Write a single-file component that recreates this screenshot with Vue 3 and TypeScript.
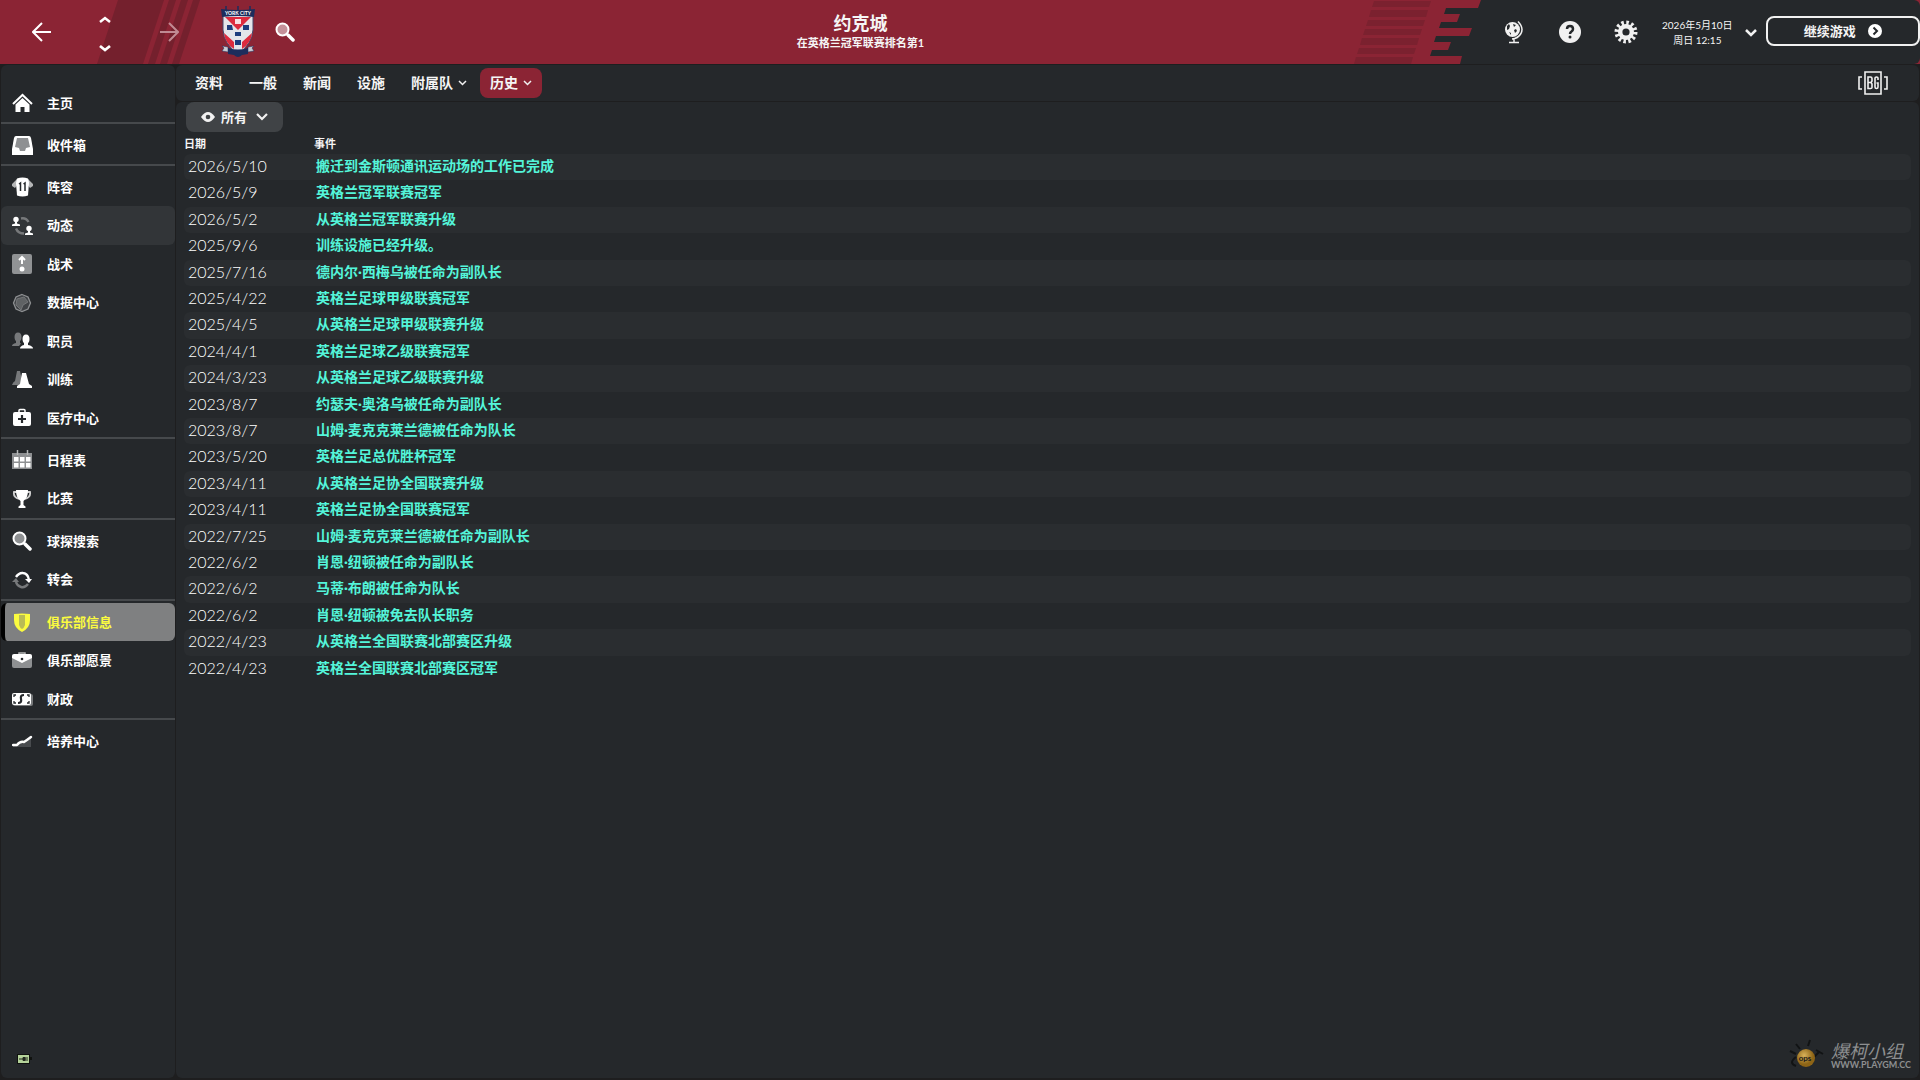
<script setup lang="ts">
import { ref } from 'vue'

interface NavItem {
  label: string
  icon: string
}

interface ClubEvent {
  date: string
  text: string
}

const icons: Record<string, string> = {
  home: '<path d="M1 11 10.500 2 20 11" fill="none" stroke="#fff" stroke-width="2"/><path d="M10.500 5 3.500 11.500V19h5v-5h4v5h5v-7.500z" fill="#fff"/>',
  inbox: '<path d="M4 1h13q1.500 0 2 2l2 11v6H0v-6L2 3q.5-2 2-2z" fill="#fff"/><path d="M5 3h11l2 9-4 1-1 3H8l-1-3-4-1z" fill="#8e9092"/>',
  shirt: '<path d="M5 2 0 7v2l3 2 3-4zM16 2l5 5v2l-3 2-3-4z" fill="#b5b6b7"/><path d="M5 1.500q5.500-2 11 0l1 4-1 13q-5.500 2-11 0L4 6z" fill="#fff"/><path d="m7 7 1.500-1v8M11.500 7 13 6v8" fill="none" stroke="#25282b" stroke-width="1.500"/>',
  dynamics: '<path d="M9 2.500q5-1 7.500 3.500M4 12.500q2 5 8 5" fill="none" stroke="#77797b" stroke-width="2.400"/><circle cx="4" cy="3.500" r="2.700" fill="#fff"/><path d="M3 5h2v2.500l3 1V10H0V8.500l3-1zM16 14h2v2.500l3 1V19h-8v-1.500l3-1z" fill="#fff"/><circle cx="17" cy="12.500" r="2.700" fill="#fff"/>',
  tactics: '<rect x="0" y="0" width="20" height="20" rx="2" fill="#909294"/><path d="M10 10V3M7 6l3-3 3 3" fill="none" stroke="#fff" stroke-width="2"/><circle cx="10" cy="15" r="2.500" fill="#fff"/>',
  data: '<path d="M10 1.500 16 4l2.500 6L16 16l-6 2.500L4 16l-2.500-6L4 4z" fill="#3f4245" stroke="#8e9092" stroke-width="1.300"/><path d="m5 6 7-2 4 5-5 3-2 5-5-5z" fill="#5f6264" stroke="#747678"/>',
  staff: '<g fill="#77797b"><ellipse cx="6" cy="6" rx="3.500" ry="4.500"/><path d="M4 9h4v3l1 .5-2 2.500H0q0-2 4-3z"/></g><g fill="#fff"><ellipse cx="14" cy="8" rx="3.500" ry="4.500"/><path d="M12 11h4v3q5 1 5 3.500H8q0-2.500 4-3.500z"/></g>',
  training: '<path d="M5 1h3l3 14H0q1-3 3-4z" fill="#77797b"/><path d="M10 3h4l3 11 3 2v2H5v-2l3-2z" fill="#fff"/>',
  medical: '<rect x="7" y="1.500" width="6" height="5" rx="1" fill="none" stroke="#fff" stroke-width="1.500"/><rect x="1" y="4" width="18" height="14" rx="2" fill="#fff"/><path d="M10 7v8M6 11h8" stroke="#25282b" stroke-width="2.200"/>',
  calendar: '<path d="M0 3h20v16H0z" fill="#8e9092"/><path d="M5.500 0v5M15.500 0v5" stroke="#b5b6b7" stroke-width="1.500"/><path d="M2 7h4.500v4.500H2zM8 7h4.500v4.500H8zM14 7h4.500v4.500H14zM2 13h4.500v4.500H2zM8 13h4.500v4.500H8zM14 13h4.500v4.500H14z" fill="#fff"/>',
  cup: '<path d="M5 3H2q-1 5 5 7M15 3h3q1 5-5 7" fill="none" stroke="#d0d0d0" stroke-width="1.800"/><path d="M4 1h12q0 8-4.500 11v4l2 1.500V19h-7v-1.500l2-1.500v-4Q4 9 4 1z" fill="#fff"/>',
  search: '<circle cx="7.500" cy="7.500" r="6" fill="#8e9092" stroke="#fff" stroke-width="2"/><path d="m13 13 5 5" stroke="#fff" stroke-width="3.500" stroke-linecap="round"/>',
  transfer: '<path d="M4 7Q7 2.500 11 3q5 .5 6 7" fill="none" stroke="#fff" stroke-width="2.400"/><path d="M13 9h7l-3 4z" fill="#fff"/><path d="M16 14q-3 4-7 3-4-1-5-5" fill="none" stroke="#77797b" stroke-width="2.400"/><path d="M0 12h7l-3-4z" fill="#77797b"/>',
  shield: '<path d="M2 2q8-1 16 0v6q0 8-8 12Q2 16 2 8z" fill="#fbfb3f"/><path d="M7 3h6v10q-1 3-3 4-2-1-3-4z" fill="#b9bb55"/>',
  briefcase: '<path d="M7 4V2h6v2" fill="none" stroke="#b5b6b7" stroke-width="1.500"/><path d="M0 6q0-2 2-2h16q2 0 2 2v9q0 2-2 2H2q-2 0-2-2z" fill="#8e9092"/><path d="M0 5q0-2 2-2h16q2 0 2 2v2l-10 5L0 7z" fill="#fff"/><circle cx="10" cy="8" r="1.300" fill="#25282b"/>',
  finance: '<rect x="1" y="5" width="20" height="12" rx="2" fill="#77797b"/><rect x="0" y="4" width="19" height="12" rx="2" fill="#fff"/><path d="M12 6q-4 0-3 4t-3 4" fill="none" stroke="#25282b" stroke-width="2.200"/><path d="M2 8V6h2M15 6h2v2M2 12v2h2M15 14h2v-2" fill="none" stroke="#25282b" stroke-width="1.300"/>',
  youth: '<path d="M1 14h4l4-4 4 1 6-5v10H1z" fill="#484b4e"/><path d="M1 14h4q3-4 7-3 3-2 7-5" fill="none" stroke="#fff" stroke-width="2.400" stroke-linecap="round" stroke-linejoin="round"/>',
}

const navGroups: NavItem[][] = [
  [{ label: '主页', icon: 'home' }],
  [{ label: '收件箱', icon: 'inbox' }],
  [
    { label: '阵容', icon: 'shirt' },
    { label: '动态', icon: 'dynamics' },
    { label: '战术', icon: 'tactics' },
    { label: '数据中心', icon: 'data' },
    { label: '职员', icon: 'staff' },
    { label: '训练', icon: 'training' },
    { label: '医疗中心', icon: 'medical' },
  ],
  [
    { label: '日程表', icon: 'calendar' },
    { label: '比赛', icon: 'cup' },
  ],
  [
    { label: '球探搜索', icon: 'search' },
    { label: '转会', icon: 'transfer' },
  ],
  [
    { label: '俱乐部信息', icon: 'shield' },
    { label: '俱乐部愿景', icon: 'briefcase' },
    { label: '财政', icon: 'finance' },
  ],
  [{ label: '培养中心', icon: 'youth' }],
]

const activeNav = ref('俱乐部信息')
const hoveredNav = ref('动态')

const tabs = [
  { label: '资料', menu: false },
  { label: '一般', menu: false },
  { label: '新闻', menu: false },
  { label: '设施', menu: false },
  { label: '附属队', menu: true },
  { label: '历史', menu: true },
]
const activeTab = ref('历史')

const events: ClubEvent[] = [
  { date: '2026/5/10', text: '搬迁到金斯顿通讯运动场的工作已完成' },
  { date: '2026/5/9', text: '英格兰冠军联赛冠军' },
  { date: '2026/5/2', text: '从英格兰冠军联赛升级' },
  { date: '2025/9/6', text: '训练设施已经升级。' },
  { date: '2025/7/16', text: '德内尔·西梅乌被任命为副队长' },
  { date: '2025/4/22', text: '英格兰足球甲级联赛冠军' },
  { date: '2025/4/5', text: '从英格兰足球甲级联赛升级' },
  { date: '2024/4/1', text: '英格兰足球乙级联赛冠军' },
  { date: '2024/3/23', text: '从英格兰足球乙级联赛升级' },
  { date: '2023/8/7', text: '约瑟夫·奥洛乌被任命为副队长' },
  { date: '2023/8/7', text: '山姆·麦克克莱兰德被任命为队长' },
  { date: '2023/5/20', text: '英格兰足总优胜杯冠军' },
  { date: '2023/4/11', text: '从英格兰足协全国联赛升级' },
  { date: '2023/4/11', text: '英格兰足协全国联赛冠军' },
  { date: '2022/7/25', text: '山姆·麦克克莱兰德被任命为副队长' },
  { date: '2022/6/2', text: '肖恩·纽顿被任命为副队长' },
  { date: '2022/6/2', text: '马蒂·布朗被任命为队长' },
  { date: '2022/6/2', text: '肖恩·纽顿被免去队长职务' },
  { date: '2022/4/23', text: '从英格兰全国联赛北部赛区升级' },
  { date: '2022/4/23', text: '英格兰全国联赛北部赛区冠军' },
]
</script>

<template>
  <div class="app">
    <header class="topbar">
      <div class="club-side">
        <svg class="stripes" width="204" height="64" viewBox="0 0 204 64" aria-hidden="true">
          <path d="M118 0h46l-21 64H97zM169 0h7l-21 64h-7zM181 0h7l-21 64h-7zM193 0h7l-21 64h-7z" fill="#74202d" />
        </svg>
        <button class="icon-btn" aria-label="后退">
          <svg width="20" height="20" viewBox="0 0 20 20" fill="none" stroke="#fff" stroke-width="2"><path d="M19 10H2M10 1 1 10l9 9" /></svg>
        </button>
        <div class="stepper">
          <button class="icon-btn" aria-label="上一个">
            <svg width="12" height="8" viewBox="0 0 12 8" fill="none" stroke="#fff" stroke-width="2.500"><path d="m1 6 5-4 5 4" /></svg>
          </button>
          <button class="icon-btn" aria-label="下一个">
            <svg width="12" height="8" viewBox="0 0 12 8" fill="none" stroke="#fff" stroke-width="2.800"><path d="m1 2 5 4 5-4" /></svg>
          </button>
        </div>
        <button class="icon-btn" aria-label="前进">
          <svg width="20" height="20" viewBox="0 0 20 20" fill="none" stroke="#c08a93" stroke-width="2"><path d="M1 10h17M10 1l9 9-9 9" /></svg>
        </button>
        <svg class="crest" width="34" height="52" viewBox="0 0 34 52" role="img" aria-label="York City">
          <path d="M5 5V0M17 5V0M29 5V0" stroke="#1d2d5c" stroke-width="1.500" />
          <path d="M2 9h30v15q-1 14-15 24Q3 38 2 24z" fill="#e3e5ea" stroke="#44476a" />
          <path d="M4 11h26L17 24z" fill="#dc2b3e" />
          <path d="M3 27l10 9v7Q4 37 3 27zM31 27l-10 9v7q9-6 10-16z" fill="#dc2b3e" />
          <path d="M14 13h6v5h-6z" fill="#f7dfe2" />
          <g fill="#1d3d7d">
            <path d="M6 19h5l1 5H6zM22 19h6v5h-6zM14 26h6v4h-6zM14 34h6v5h-6z" />
            <path d="M0 3q17 2 34 0l-1 8q-16-2-32 0z" fill="#1d2d5c" />
          </g>
          <path d="M1 40l6 1v5l-6-1 2-3zM33 40l-6 1v5l6-1-2-3z" fill="#c8cbd2" stroke="#1d2d5c" stroke-width="0.500" />
          <path d="M7 42q10 3 20 0v6l-6 1q-4 4-8 0l-6-1z" fill="#1d2d5c" />
          <text x="17" y="9" font-size="5" font-weight="700" text-anchor="middle" fill="#fff">YORK CITY</text>
        </svg>
        <button class="icon-btn" aria-label="搜索">
          <svg width="20" height="20" viewBox="0 0 20 20"><circle cx="7.500" cy="7.500" r="6" fill="#c5919a" stroke="#fff" stroke-width="2" /><path d="m13 13 5 5" stroke="#fff" stroke-width="3.500" stroke-linecap="round" /></svg>
        </button>
      </div>

      <div class="club-title">
        <h1>约克城</h1>
        <p>在英格兰冠军联赛排名第1</p>
      </div>

      <div class="tools">
        <svg class="stripes" width="150" height="64" viewBox="0 0 150 64" aria-hidden="true">
          <path d="M0 0h131l-3 8H96l-2 6h16l-3 8H91l-2 6h33l-3 8H86l-2 6h17l-3 8H82l-2 6h32l-2 8H0z" fill="#8b2434" />
          <path d="M24 1h57l-2 6H22zM21 10h57l-2 7H19zM18 20h57l-2 6H16zM15 29h57l-2 6H13zM12 38h57l-2 7H10zM9 48h57l-2 6H7zM6 57h57l-2 7H4z" fill="#7b212f" />
        </svg>
        <button class="icon-btn tool" aria-label="世界">
          <svg width="20" height="24" viewBox="0 0 20 24"><circle cx="8.500" cy="9.500" r="7.500" fill="#f1f1f1" /><path d="M14 1.500q6 6 3 12-3 5-9 5.500M10 19v3M5 22.500h10" fill="none" stroke="#f1f1f1" stroke-width="1.500" /><path d="m3 6 2-2 1 2-1 3-2 1zM9 4l3 1-2 2zM10 10l2-1 1 2-2 2zM5 12l2 1v2z" fill="#25282b" /></svg>
        </button>
        <button class="icon-btn tool" aria-label="帮助">
          <svg width="22" height="22" viewBox="0 0 22 22"><circle cx="11" cy="11" r="11" fill="#f1f1f1" /><path d="M8 8q0-3 3-3t3 3q0 1.500-1.500 2.500T11 13" fill="none" stroke="#25282b" stroke-width="2.500" /><circle cx="11" cy="16" r="1.500" fill="#25282b" /></svg>
        </button>
        <button class="icon-btn tool" aria-label="设置">
          <svg width="24" height="24" viewBox="0 0 24 24"><circle cx="12" cy="12" r="9" fill="none" stroke="#f1f1f1" stroke-width="5" stroke-dasharray="2.400 2.312" /><circle cx="12" cy="12" r="5.800" fill="none" stroke="#f1f1f1" stroke-width="4.400" /></svg>
        </button>
        <button class="date">
          <span><time datetime="2026-05-10">2026年5月10日</time><br />周日 12:15</span>
          <svg width="12" height="8" viewBox="0 0 12 8" fill="none" stroke="#f1f1f1" stroke-width="2.500"><path d="m1 1 5 5 5-5" /></svg>
        </button>
        <button class="continue">
          <span>继续游戏</span>
          <svg width="14" height="14" viewBox="0 0 14 14"><circle cx="7" cy="7" r="7" fill="#fff" /><path d="m5.500 3.500 3.500 3.500-3.500 3.500" fill="none" stroke="#25282b" stroke-width="2" /></svg>
        </button>
      </div>
    </header>

    <div class="body">
      <nav class="sidebar panel">
        <ul v-for="(group, g) in navGroups" :key="g" class="nav-group">
          <li v-for="item in group" :key="item.label">
            <a
              href="#"
              :class="{ active: item.label === activeNav, hovered: item.label === hoveredNav }"
              @click.prevent="activeNav = item.label"
            >
              <svg width="21" height="20" viewBox="0 0 21 20" aria-hidden="true" v-html="icons[item.icon]"></svg>
              <span>{{ item.label }}</span>
            </a>
          </li>
        </ul>
        <svg class="battery" width="16" height="10" viewBox="0 0 16 10" aria-hidden="true"><path d="M0 0h13v3h2v3h-2v4H0z" fill="#10120f" /><path d="M1 1h11v8H1z" fill="#b5d39a" /><path d="M2 5h4M6 3.500h2v3H6zM8 4h3M8 6h3" fill="#23281f" stroke="#23281f" /></svg>
      </nav>

      <main class="main">
        <div class="tabbar panel">
          <button
            v-for="tab in tabs"
            :key="tab.label"
            :class="['tab', { active: tab.label === activeTab }]"
            @click="activeTab = tab.label"
          >
            <span>{{ tab.label }}</span>
            <svg v-if="tab.menu" width="9" height="6" viewBox="0 0 9 6" fill="none" stroke="#f1f1f1" stroke-width="1.500"><path d="m1 1 3.500 3.500L8 1" /></svg>
          </button>
          <svg class="badge" width="30" height="24" viewBox="0 0 30 24" role="img" aria-label="BG">
            <path d="M7 1h16v22H7zM4 6H1v12h3M26 6h3v12h-3" fill="none" stroke="#f1f1f1" stroke-width="1.600" />
            <path d="M10 6h2.500q1.500 0 1.500 1.500V10l-1 1.500 1 1.500v3.500q0 1-1.500 1H10zM10 11.500h3M20 9V7q0-1-1.500-1T17 7v9q0 1.500 1.500 1.500T20 16v-4h-1.500" fill="none" stroke="#f1f1f1" stroke-width="1.600" />
          </svg>
        </div>

        <section class="content panel">
          <button class="filter">
            <svg width="14" height="10" viewBox="0 0 14 10"><path d="M0 5q7-10 14 0-7 10-14 0z" fill="#f1f1f1" /><circle cx="7" cy="5" r="2.300" fill="#404346" /></svg>
            <span>所有</span>
            <svg class="caret" width="12" height="8" viewBox="0 0 12 8" fill="none" stroke="#f1f1f1" stroke-width="2.200"><path d="m1 1 5 5 5-5" /></svg>
          </button>

          <table class="history">
            <thead>
              <tr>
                <th class="col-date" scope="col">日期</th>
                <th scope="col">事件</th>
              </tr>
            </thead>
            <tbody>
              <tr v-for="(event, i) in events" :key="i">
                <td class="when">{{ event.date }}</td>
                <td><a href="#" @click.prevent>{{ event.text }}</a></td>
              </tr>
            </tbody>
          </table>

          <footer class="credit">
            <svg width="36" height="34" viewBox="0 0 36 34" aria-hidden="true">
              <defs>
                <radialGradient id="ball" cx="40%" cy="35%"><stop offset="0" stop-color="#d8b25a" /><stop offset="1" stop-color="#8d6416" /></radialGradient>
              </defs>
              <path d="m8 5 4 5M22 1l-2 6M2 12l6 3M26 18l5-5M28 11l7 4M8 18q-8 6 0 9" fill="none" stroke="#111314" stroke-width="2" />
              <circle cx="18" cy="19" r="9" fill="url(#ball)" />
              <text x="17" y="22" font-size="8" font-weight="700" text-anchor="middle" fill="#1b1b1b">ops</text>
            </svg>
            <div>
              <p class="credit-name">爆柯小组</p>
              <p class="credit-url">WWW.PLAYGM.CC</p>
            </div>
          </footer>
        </section>
      </main>
    </div>
  </div>
</template>

<style>
html,
body {
  background: #1e1e1f;
}
</style>

<style scoped>
* {
  box-sizing: border-box;
}

.app {
  display: flex;
  flex-direction: column;
  min-height: 100vh;
  color: #f5f5f5;
  font-family: Lato, 'Noto Sans CJK SC', sans-serif;
  font-size: 14px;
}

button {
  padding: 0;
  border: 0;
  background: none;
  color: inherit;
  font: inherit;
  cursor: pointer;
}

svg {
  display: block;
  flex: none;
}

h1,
p,
ul {
  margin: 0;
  padding: 0;
}

ul {
  list-style: none;
}

a {
  text-decoration: none;
}

/* CJK glyphs sit low in their line box; lift labels to the optical middle. */
.tab span,
.filter span,
.nav-group span,
.continue span {
  padding-bottom: 2px;
}

.panel {
  background: #25282b;
  border-radius: 6px;
}

.topbar {
  display: flex;
  height: 64px;
  background: #8b2434;
}

.club-side {
  position: relative;
  display: flex;
  align-items: center;
  width: 304px;
  padding-left: 32px;
}

.club-side > button,
.stepper,
.crest {
  position: relative;
}

.stripes {
  position: absolute;
  top: 0;
  left: 0;
}

.stepper {
  display: flex;
  flex-direction: column;
  gap: 20px;
  margin: 0 48px 0 47px;
  padding-top: 3px;
}

.crest {
  margin: 0 20px 0 42px;
}

.club-title {
  display: flex;
  flex: 1;
  flex-direction: column;
  align-items: center;
  justify-content: center;
  padding-left: 67px;
}

.club-title h1 {
  font-size: 18px;
  font-weight: 700;
  line-height: 22px;
}

.club-title p {
  font-size: 11px;
  font-weight: 700;
  line-height: 18px;
}

.tools {
  position: relative;
  display: flex;
  align-items: center;
  width: 570px;
  padding-left: 136px;
  background: #25282b;
  border-radius: 0 6px 6px 0;
}

.tool {
  display: flex;
  justify-content: center;
  width: 56px;
}

.date {
  display: flex;
  gap: 12px;
  align-items: center;
  margin: 0 9px 0 8px;
  padding-top: 2px;
  font-size: 10px;
  line-height: 15px;
  white-space: nowrap;
}

.continue {
  display: flex;
  flex: 1;
  gap: 12px;
  align-items: center;
  justify-content: center;
  height: 30px;
  margin-bottom: 2px;
  border: 2px solid #f1f1f1;
  border-radius: 8px;
  font-size: 13px;
  font-weight: 700;
}

.body {
  display: flex;
  flex: 1;
  gap: 1px;
  padding: 1px 1px 2px;
}

.sidebar {
  display: flex;
  flex-direction: column;
  width: 174px;
  padding-top: 17px;
}

.nav-group {
  padding-top: 2px;
  border-bottom: 2px solid #46494c;
}

.nav-group:last-of-type {
  border-bottom: 0;
}

.nav-group li {
  height: 38px;
}

.nav-group li:nth-child(even) {
  height: 39px;
}

.nav-group a {
  display: flex;
  gap: 14px;
  align-items: center;
  height: 100%;
  padding-left: 11px;
  border-radius: 6px;
  color: #fff;
  font-size: 13px;
  font-weight: 700;
}

.nav-group .hovered {
  background: #323538;
}

.nav-group .active {
  padding-left: 7px;
  border-left: 4px solid #000;
  background: #7f8081;
  color: #fbfb3f;
}

.battery {
  margin: auto 0 14px 16px;
}

.main {
  display: flex;
  flex: 1;
  flex-direction: column;
  gap: 1px;
  min-width: 0;
}

.tabbar {
  display: flex;
  align-items: center;
  height: 36px;
  padding: 0 31px 0 6px;
}

.tab {
  display: flex;
  gap: 5px;
  align-items: center;
  height: 30px;
  padding: 0 13px;
  font-weight: 700;
}

.tab.active {
  padding: 0 10px;
  border-radius: 8px;
  background: #8b2434;
}

.badge {
  margin-left: auto;
}

.content {
  display: flex;
  flex: 1;
  flex-direction: column;
  padding: 0 8px 5px;
}

.filter {
  display: flex;
  gap: 6px;
  align-items: center;
  align-self: flex-start;
  height: 30px;
  margin-left: 2px;
  padding: 0 15px;
  border-radius: 8px;
  background: #404346;
  font-size: 13px;
  font-weight: 700;
}

.caret {
  margin-left: 3px;
}

.history {
  width: 100%;
  border-collapse: collapse;
}

.history th {
  height: 22px;
  padding: 1px 0 0;
  font-size: 11px;
  font-weight: 700;
  line-height: 16px;
  text-align: left;
}

.history .col-date {
  width: 130px;
}

.history td {
  height: 26px;
  padding: 0 2px 3px;
  font-weight: 700;
  line-height: 20px;
}

.history tr:nth-child(5n + 2) td,
.history tr:nth-child(5n + 4) td {
  height: 27px;
}

.history tbody tr:nth-child(odd) td {
  background: #2a2d30;
}

.history td:first-child {
  padding-left: 4px;
  border-radius: 6px 0 0 6px;
}

.history td:last-child {
  border-radius: 0 6px 6px 0;
}

.history .when {
  color: #fff;
  font-size: 16px;
  font-weight: 300;
}

.history a {
  color: #54f5da;
}

.credit {
  display: flex;
  gap: 7px;
  align-items: center;
  align-self: flex-end;
  margin-top: auto;
  color: #8d8f90;
}

.credit-name {
  font-size: 18px;
  font-style: italic;
  line-height: 18px;
}

.credit-url {
  font-size: 9px;
  font-weight: 700;
  line-height: 10px;
}
</style>
